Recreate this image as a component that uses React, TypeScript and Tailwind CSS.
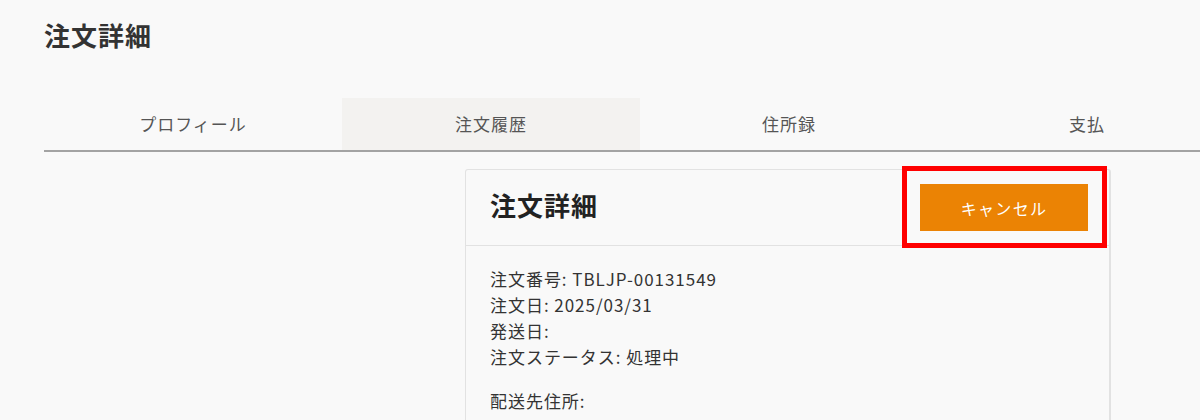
const tabs = ["プロフィール", "注文履歴", "住所録", "支払"];

export default function App() {
    return (
        <div
            className="h-[420px] w-[1200px] overflow-hidden bg-[#f9f9f9] tracking-[0.06em] text-[#333]"
            style={{ fontFamily: '"Noto Sans CJK JP", "Noto Sans", sans-serif' }}
        >
            <div className="pl-11 pt-[17px]">
                <h1 className="text-[26px] font-bold leading-9 text-[#333]">注文詳細</h1>
                <div className="mt-[45px] flex w-[1240px] border-b-2 border-[#a3a3a3]">
                    {tabs.map((tab, idx) => (
                        <div
                            key={tab}
                            className={`flex h-[52px] w-[298px] shrink-0 items-center justify-center text-[17px] text-[#555] ${
                                idx === 1 ? "bg-[#f3f2f0]" : ""
                            }`}
                        >
                            {tab}
                        </div>
                    ))}
                </div>
                <div className="ml-[421px] mt-[17px] w-[646px]">
                    <div className="relative rounded-t-[3px] border border-r-2 border-[#e2e2e2] bg-[#f9f9f9]">
                        <div className="flex h-[76px] items-center justify-between border-b border-[#e2e2e2] pl-6 pr-[21px]">
                            <h2 className="mb-[6px] text-[26px] font-bold text-[#222]">注文詳細</h2>
                            <button className="h-[47px] w-[168px] bg-[#eb8304] text-[16px] tracking-[0.08em] text-white">
                                キャンセル
                            </button>
                            <div className="pointer-events-none absolute left-[436px] top-[-4px] h-[82px] w-[205px] border-[5px] border-[#ff0000]" />
                        </div>
                        <div className="px-6 pb-10 pt-[20px] text-[17px] leading-[26px] text-[#333]">
                            <div>注文番号: TBLJP-00131549</div>
                            <div>注文日: 2025/03/31</div>
                            <div>発送日:</div>
                            <div>注文ステータス: 処理中</div>
                            <div className="mt-[18px]">配送先住所:</div>
                        </div>
                    </div>
                </div>
            </div>
        </div>
    );
}
